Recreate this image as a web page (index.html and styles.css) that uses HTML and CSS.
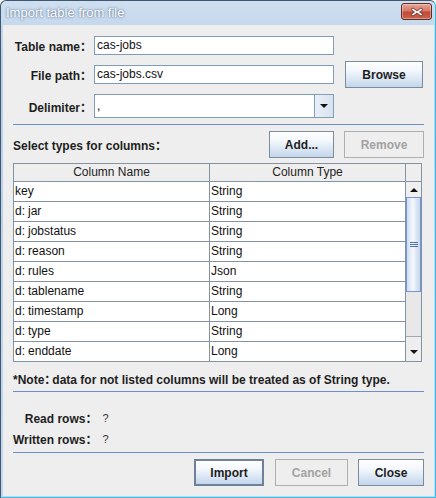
FILE: index.html
```html
<!DOCTYPE html>
<html>
<head>
<meta charset="utf-8">
<title>Import table from file</title>
<link rel="stylesheet" href="styles.css">
</head>
<body>
<div class="window">
  <div class="titlebar">
    <span class="title">Import table from file</span>
    <span class="close-btn">
      <svg width="14" height="10" viewBox="0 0 14 10"><path d="M3 1 L7 4 L11 1 L13 2.5 L9.5 5 L13 7.5 L11 9 L7 6 L3 9 L1 7.5 L4.5 5 L1 2.5 Z" fill="#ffffff" stroke="#5a2a24" stroke-width="0.8" stroke-linejoin="round"/></svg>
    </span>
  </div>
  <div class="content">
    <div class="form">
      <label class="lbl">Table name<span class="colon">：</span></label>
      <div class="field">cas-jobs</div>
      <div></div>
      <label class="lbl">File path<span class="colon">：</span></label>
      <div class="field">cas-jobs.csv</div>
      <button class="btn btn-browse">Browse</button>
      <label class="lbl">Delimiter<span class="colon">：</span></label>
      <div class="combo">
        <div class="combo-text">,</div>
        <div class="combo-arrow"><span class="tri-down"></span></div>
      </div>
      <div></div>
    </div>
    <div class="sep sep-1"></div>
    <div class="toolbar">
      <span class="bold-text">Select types for columns<span class="colon">：</span></span>
      <div class="toolbar-btns">
        <button class="btn btn-add">Add...</button>
        <button class="btn btn-remove" disabled>Remove</button>
      </div>
    </div>
    <div class="table">
      <div class="thead">
        <div class="th c1">Column Name</div>
        <div class="th c2">Column Type</div>
        <div class="th corner"></div>
      </div>
      <div class="tbody">
        <div class="rows">
          <div class="tr"><div class="td c1">key</div><div class="td c2">String</div></div>
          <div class="tr"><div class="td c1">d<span class="cc">:</span>jar</div><div class="td c2">String</div></div>
          <div class="tr"><div class="td c1">d<span class="cc">:</span>jobstatus</div><div class="td c2">String</div></div>
          <div class="tr"><div class="td c1">d<span class="cc">:</span>reason</div><div class="td c2">String</div></div>
          <div class="tr"><div class="td c1">d<span class="cc">:</span>rules</div><div class="td c2">Json</div></div>
          <div class="tr"><div class="td c1">d<span class="cc">:</span>tablename</div><div class="td c2">String</div></div>
          <div class="tr"><div class="td c1">d<span class="cc">:</span>timestamp</div><div class="td c2">Long</div></div>
          <div class="tr"><div class="td c1">d<span class="cc">:</span>type</div><div class="td c2">String</div></div>
          <div class="tr"><div class="td c1">d<span class="cc">:</span>enddate</div><div class="td c2">Long</div></div>
        </div>
        <div class="vscroll">
          <div class="sb-up"><span class="tri-up"></span></div>
          <div class="sb-thumb"><span class="grip"></span></div>
          <div class="sb-track"></div>
          <div class="sb-down"><span class="tri-down"></span></div>
        </div>
      </div>
    </div>
    <div class="note bold-text">*Note<span class="colon note-colon">：</span>data for not listed columns will be treated as of String type.</div>
    <div class="sep sep-2"></div>
    <div class="info">
      <span class="lbl">Read rows<span class="colon">：</span></span><span class="val">?</span>
      <span class="lbl">Written rows<span class="colon">：</span></span><span class="val">?</span>
    </div>
    <div class="sep sep-3"></div>
    <div class="actions">
      <button class="btn btn-import">Import</button>
      <button class="btn btn-cancel" disabled>Cancel</button>
      <button class="btn btn-close">Close</button>
    </div>
  </div>
</div>
</body>
</html>
```
FILE: styles.css
```css
* { box-sizing: border-box; }
html, body { margin: 0; padding: 0; background: #ffffff; }
body { font-family: "Liberation Sans", "Noto Sans CJK SC", sans-serif; font-size: 12px; color: #000; }

.window {
  width: 436px;
  height: 498px;
  border: 1px solid #3e5874;
  border-right-color: #2ec3e6;
  border-bottom-color: #2ec3e6;
  border-radius: 6px 6px 0 0;
  background: linear-gradient(#cfdff0, #b9cfe6 60px, #c4d7ec);
  padding: 0 1px 1px 2px;
  display: flex;
  flex-direction: column;
}

.titlebar {
  height: 24px;
  display: flex;
  align-items: center;
  justify-content: space-between;
  padding: 0 2px 0 3px;
  flex: none;
}
.title {
  color: #ffffff;
  font-size: 13px;
  text-shadow: 0 0 3px #58718f, 0 0 1px #7890ab;
  margin-top: -2px;
}
.close-btn {
  width: 31px;
  height: 17px;
  margin-top: -3px;
  border: 1px solid #5d2a24;
  border-radius: 3px;
  background: linear-gradient(#e7a597, #d77866 45%, #c24a35 55%, #c86450);
  display: flex;
  align-items: center;
  justify-content: center;
  box-shadow: inset 0 0 0 1px rgba(255,255,255,0.35);
}

.content {
  flex: 1;
  background: #eeeeee;
  padding: 11px 10px 0 10px;
  display: flex;
  flex-direction: column;
}

.bold-text, .lbl { font-weight: bold; color: #1e1e1e; }
.colon { font-family: "Noto Sans CJK SC", sans-serif; }
.note-colon { letter-spacing: -4px; }

.form {
  display: grid;
  grid-template-columns: 79px 240px 78px;
  grid-template-rows: 19px 27px 24px;
  column-gap: 2px;
  row-gap: 6px;
  align-items: center;
}
.form > :nth-child(3n+3) { margin-left: 9px; }
.form .lbl { justify-self: end; white-space: nowrap; }

.field {
  height: 19px;
  background: #fff;
  border: 1px solid #7f9db9;
  padding: 0 2px;
  line-height: 17px;
  color: #111;
}

.combo { display: flex; height: 24px; }
.combo-text {
  flex: 1;
  background: #fff;
  border: 1px solid #7f9db9;
  padding: 0 2px;
  line-height: 22px;
}
.combo-arrow {
  width: 19px;
  border: 1px solid #7f9db9;
  border-left: none;
  background: linear-gradient(to right, #e9eff7, #d7e2ef);
  display: flex;
  align-items: center;
  justify-content: center;
}

.tri-down {
  width: 0; height: 0;
  border-left: 4px solid transparent;
  border-right: 4px solid transparent;
  border-top: 4px solid #111;
}
.tri-up {
  width: 0; height: 0;
  border-left: 4px solid transparent;
  border-right: 4px solid transparent;
  border-bottom: 4px solid #111;
}

.btn {
  font-family: "Liberation Sans", "Noto Sans CJK SC", sans-serif;
  font-size: 12px;
  font-weight: bold;
  color: #1e1e1e;
  height: 27px;
  padding: 0;
  border: 1px solid #7d8c9c;
  background: linear-gradient(#ffffff, #f3f7fc 35%, #c3d6ec);
  border-radius: 0;
}
.btn:disabled {
  color: #a3a3a3;
  border-color: #adb0b3;
  background: #eeeeee;
}
.btn-browse { width: 78px; }

.sep { border-top: 1px solid #6c8ecb; height: 0; }
.sep-1 { margin-top: 6px; }

.toolbar {
  margin-top: 6px;
  display: flex;
  justify-content: space-between;
  align-items: center;
  height: 27px;
}
.toolbar-btns { display: flex; gap: 10px; }
.btn-add { width: 65px; }
.btn-remove { width: 80px; }

.table {
  margin-top: 5px;
  width: 409px;
  height: 199px;
  border: 1px solid #8393a4;
  background: #fff;
  display: flex;
  flex-direction: column;
}
.thead {
  display: flex;
  height: 18px;
  border-bottom: 1px solid #8393a4;
  background: #eeeeee;
}
.th {
  text-align: center;
  line-height: 17px;
  color: #222;
}
.c1 { width: 196px; border-right: 1px solid #8393a4; }
.c2 { width: 196px; border-right: 1px solid #8393a4; }
.corner { width: 15px; }

.tbody { display: flex; flex: 1; }
.rows { width: 392px; }
.tr { display: flex; height: 20px; border-bottom: 1px solid #8393a4; }
.tr:last-child { border-bottom: none; height: 19px; }
.td {
  padding-left: 1px;
  line-height: 19px;
  color: #111;
  white-space: nowrap;
}
.cc { margin-right: 3px; }

.vscroll {
  width: 15px;
  display: flex;
  flex-direction: column;
  background: #e8e8e8;
}
.sb-up {
  height: 15px;
  display: flex;
  align-items: center;
  justify-content: center;
  background: #f0f0f0;
}
.sb-thumb {
  height: 95px;
  border: 1px solid #7598d2;
  background: linear-gradient(to right, #cddcf1, #f6f9fd 45%, #dfe8f5 70%, #c4d6ee);
  display: flex;
  align-items: center;
  justify-content: center;
}
.grip {
  width: 8px;
  height: 5px;
  background: repeating-linear-gradient(#4f6fae 0 1px, transparent 1px 2px);
}
.sb-track { flex: 1; }
.sb-down {
  height: 25px;
  border-top: 1px solid #a0a8b0;
  background: #eeeeee;
  display: flex;
  justify-content: center;
  align-items: flex-end;
  padding-bottom: 7px;
}

.note { margin-top: 10px; line-height: 14px; white-space: nowrap; }
.sep-2 { margin-top: 4px; }

.info {
  margin-top: 15px;
  display: grid;
  grid-template-columns: max-content auto;
  grid-auto-rows: 21px;
  column-gap: 5px;
  align-items: center;
}
.info .lbl { justify-self: end; white-space: nowrap; }
.val { font-size: 11px; color: #333; }

.sep-3 { margin-top: 3px; }

.actions {
  margin-top: 6px;
  display: flex;
  justify-content: flex-end;
  gap: 10px;
}
.btn-import { width: 70px; border: 2px solid #6f8196; margin-right: 1px; }
.btn-cancel { width: 73px; }
.btn-close { width: 66px; }
```
